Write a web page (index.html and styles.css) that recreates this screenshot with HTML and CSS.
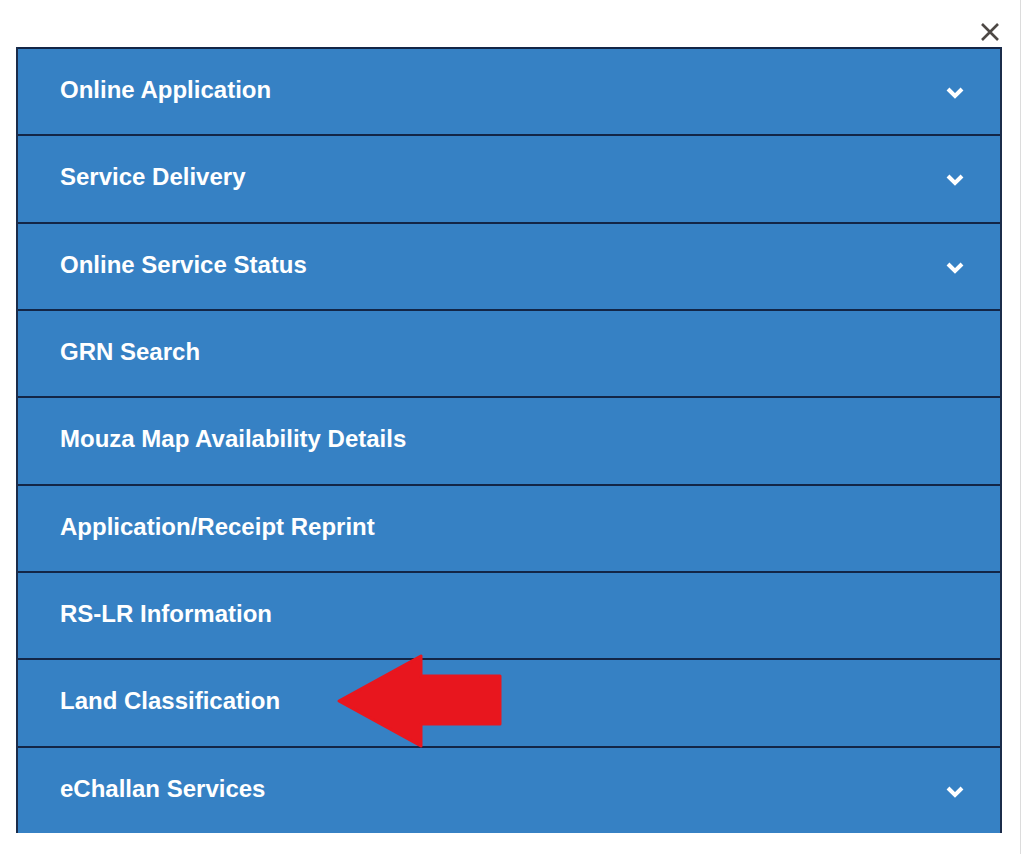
FILE: index.html
```html
<!DOCTYPE html>
<html>
<head>
	<meta charset="utf-8">
	<title>Menu</title>
	<link rel="stylesheet" href="styles.css">
</head>
<body>
	<div class="page">
		<div class="top">
			<span class="close">
				<svg width="20" height="20" viewBox="0 0 20 20">
					<path d="M2 2 L18 18 M18 2 L2 18" stroke="#4d4845" stroke-width="2.6" fill="none"/>
				</svg>
			</span>
		</div>
		<div class="menu">
			<div class="item"><span>Online Application</span><i class="down"><svg width="20" height="14" viewBox="0 0 20 14"><path d="M3 3 L10 10 L17 3" stroke="#fff" stroke-width="4" fill="none"/></svg></i></div>
			<div class="item"><span>Service Delivery</span><i class="down"><svg width="20" height="14" viewBox="0 0 20 14"><path d="M3 3 L10 10 L17 3" stroke="#fff" stroke-width="4" fill="none"/></svg></i></div>
			<div class="item"><span>Online Service Status</span><i class="down"><svg width="20" height="14" viewBox="0 0 20 14"><path d="M3 3 L10 10 L17 3" stroke="#fff" stroke-width="4" fill="none"/></svg></i></div>
			<div class="item"><span>GRN Search</span></div>
			<div class="item"><span>Mouza Map Availability Details</span></div>
			<div class="item"><span>Application/Receipt Reprint</span></div>
			<div class="item"><span>RS-LR Information</span></div>
			<div class="item"><span>Land Classification</span></div>
			<div class="item last"><span>eChallan Services</span><i class="down"><svg width="20" height="14" viewBox="0 0 20 14"><path d="M3 3 L10 10 L17 3" stroke="#fff" stroke-width="4" fill="none"/></svg></i></div>
		</div>
		<!-- red arrow pointing at Land Classification -->
		<svg class="arrow" width="168" height="96" viewBox="0 0 168 96">
			<polygon points="3,48 85,3 85,23 164,23 164,71 85,71 85,93" fill="#e8161e" stroke="#e8161e" stroke-width="3" stroke-linejoin="round"/>
		</svg>
	</div>
</body>
</html>
```

FILE: styles.css
```css
*{
	padding:0;
	margin:0;
	box-sizing: border-box;
}
body{
	background: #fff;
	font-family: "Liberation Sans", Arial, sans-serif;
}
.page{
	position: relative;
	width: 1021px;
	height: 854px;
	border-right: 1px solid #dcdcdc;
}
.top{
	height: 47px;
	display: flex;
	justify-content: flex-end;
	align-items: flex-end;
	padding-right: 20px;
	padding-bottom: 5px;
}
.close{
	display: block;
	height: 20px;
}
.menu{
	margin-left: 16px;
	width: 986px;
	height: 786px;
	overflow: hidden;
	background-color: #3681c4;
	border-left: 2px solid #1b2c4a;
	border-right: 2px solid #1b2c4a;
}
.item{
	height: 87.33px;
	border-top: 2px solid #132647;
	display: flex;
	align-items: center;
	justify-content: space-between;
	padding: 0 35px 3px 42px;
	color: #fff;
	font-size: 24px;
	font-weight: bold;
}
.down{
	display: block;
	height: 14px;
	margin-top: 6px;
}
.down svg{
	display: block;
}
.arrow{
	position: absolute;
	left: 336px;
	top: 653px;
}
```
